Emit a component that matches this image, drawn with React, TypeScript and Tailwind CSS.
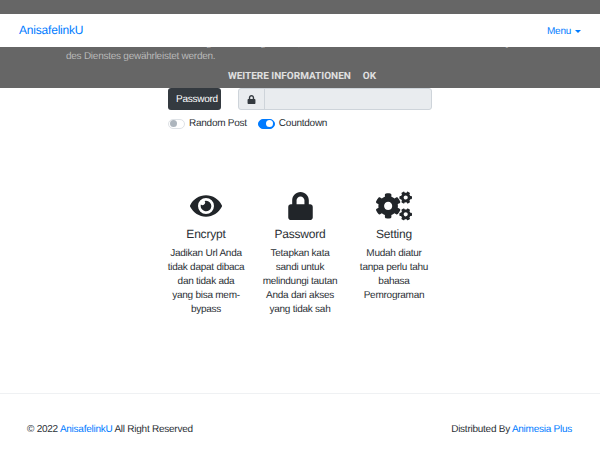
import { FaCogs, FaEye, FaLock } from 'react-icons/fa'

const FEATURES = [
  {
    icon: <FaEye className="h-[34px] w-[32px]" />,
    title: 'Encrypt',
    lines: ['Jadikan Url Anda', 'tidak dapat dibaca', 'dan tidak ada', 'yang bisa mem-', 'bypass'],
  },
  {
    icon: <FaLock className="h-[28px] w-[25px]" />,
    title: 'Password',
    lines: ['Tetapkan kata', 'sandi untuk', 'melindungi tautan', 'Anda dari akses', 'yang tidak sah'],
  },
  {
    icon: <FaCogs className="h-[32px] w-[36px]" />,
    title: 'Setting',
    lines: ['Mudah diatur', 'tanpa perlu tahu', 'bahasa', 'Pemrograman'],
  },
]

function Toggle({ on }: { on?: boolean }) {
  return (
    <span
      className={`flex h-[10px] w-[17px] items-center rounded-full border px-[1px] ${
        on ? 'justify-end border-[#007bff] bg-[#007bff]' : 'justify-start border-[#dee2e6] bg-white'
      }`}
    >
      <span className={`h-[7px] w-[7px] rounded-full ${on ? 'bg-white' : 'bg-[#adb5bd]'}`} />
    </span>
  )
}

export default function App() {
  return (
    <div className="relative h-[450px] w-[600px] overflow-hidden bg-white font-['Liberation_Sans',sans-serif] text-[10px] tracking-[-0.25px] text-[#2b3035] [text-rendering:geometricPrecision]">
      <div className="absolute inset-x-0 top-0 z-10 flex h-[88px] flex-col justify-end bg-[#666666] pb-[4px]">
        <p className="px-[66px] leading-[13px] text-[#b8b8b8]">
          <span className="block text-right">
            Nutzungsstatistiken generiert, Missbrauchsfälle erkannt und behoben und die Qualität
          </span>
          des Dienstes gewährleistet werden.
        </p>
        <div className="mt-[6px] flex justify-center gap-[12px] pl-[4px] font-['Roboto',sans-serif] text-[10px] font-bold tracking-normal text-[#e0e0e0]">
          <span>WEITERE INFORMATIONEN</span>
          <span>OK</span>
        </div>
      </div>

      <nav className="relative z-20 mt-[14px] flex h-[33px] items-center justify-between bg-white px-[19px]">
        <a className="pb-[1px] text-[12px] tracking-[-0.2px] text-[#007bff]">AnisafelinkU</a>
        <a className="flex items-center gap-[4px] pt-[1px] text-[#007bff]">
          Menu
          <span className="h-0 w-0 border-x-[3px] border-t-[3px] border-x-transparent border-t-[#007bff]" />
        </a>
      </nav>

      <main className="pt-[41px]">
        <div className="ml-[168px] flex w-[264px] items-stretch justify-between">
          <span className="flex h-[22px] w-[53px] items-center rounded-[3px] bg-[#343a40] pl-[8px] pt-[1px] text-white">
            Password
          </span>
          <div className="flex h-[22px] w-[194px] overflow-hidden rounded-[3px] border border-[#ced4da] bg-[#e9ecef]">
            <span className="flex w-[26px] items-center justify-center border-r border-[#ced4da] text-[#343a40]">
              <FaLock className="h-[9px] w-[9px]" />
            </span>
          </div>
        </div>
        <div className="ml-[168px] mt-[6px] flex items-center">
          <Toggle />
          <span className="ml-[4px]">Random Post</span>
          <span className="ml-[11px]">
            <Toggle on />
          </span>
          <span className="ml-[4px]">Countdown</span>
        </div>

        <section className="ml-[168px] mt-[59px] flex w-[264px] justify-between">
          {FEATURES.map((feature) => (
            <div key={feature.title} className="flex w-[76px] flex-col items-center text-center">
              <div className="flex h-[32px] items-center text-[#212529]">{feature.icon}</div>
              <h3 className="mt-[3px] text-[12px] leading-[18px] tracking-[-0.2px]">{feature.title}</h3>
              <p className="mt-[4px] whitespace-nowrap leading-[14px]">
                {feature.lines.map((line) => (
                  <span key={line} className="block">
                    {line}
                  </span>
                ))}
              </p>
            </div>
          ))}
        </section>
      </main>

      <footer className="absolute inset-x-0 bottom-0 flex h-[57px] justify-between border-t border-[#eff1f3] pl-[27px] pr-[28px] pt-[29px] leading-[14px]">
        <span>
          © 2022 <a className="text-[#007bff]">AnisafelinkU</a> All Right Reserved
        </span>
        <span>
          Distributed By <a className="text-[#007bff]">Animesia Plus</a>
        </span>
      </footer>
    </div>
  )
}
